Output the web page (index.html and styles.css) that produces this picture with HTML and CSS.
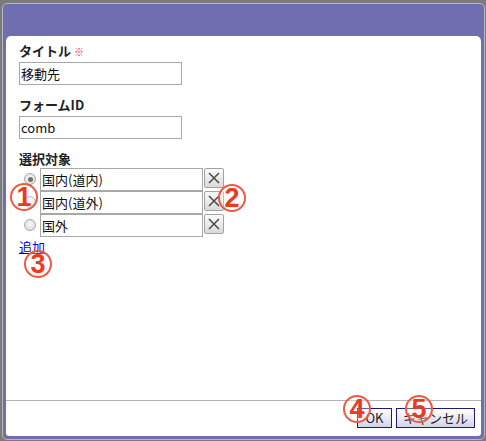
FILE: index.html
```html
<!DOCTYPE html>
<html lang="ja">
<head>
<meta charset="utf-8">
<link rel="stylesheet" href="styles.css">
</head>
<body>
<div class="dialog">
  <div class="titlebar"></div>
  <div class="panel">
    <div class="body">
      <div class="field">
        <div class="label">タイトル <span class="req">※</span></div>
        <input class="text" type="text" value="移動先">
      </div>
      <div class="field">
        <div class="label">フォームID</div>
        <input class="text" type="text" value="comb">
      </div>
      <div class="field">
        <div class="label label-tight">選択対象</div>
        <div class="opt">
          <span class="radio checked"></span>
          <input class="text" type="text" value="国内(道内)">
          <button class="del"><svg width="12" height="12" viewBox="0 0 12 12"><path d="M1 1L11 11M11 1L1 11" stroke="#4a4a4a" stroke-width="1.5" fill="none"/></svg></button>
        </div>
        <div class="opt">
          <span class="radio"></span>
          <input class="text" type="text" value="国内(道外)">
          <button class="del"><svg width="12" height="12" viewBox="0 0 12 12"><path d="M1 1L11 11M11 1L1 11" stroke="#4a4a4a" stroke-width="1.5" fill="none"/></svg></button>
        </div>
        <div class="opt">
          <span class="radio"></span>
          <input class="text" type="text" value="国外">
          <button class="del"><svg width="12" height="12" viewBox="0 0 12 12"><path d="M1 1L11 11M11 1L1 11" stroke="#4a4a4a" stroke-width="1.5" fill="none"/></svg></button>
        </div>
        <a class="add" href="#">追加</a>
      </div>
    </div>
    <div class="footer">
      <button class="btn btn-ok">OK</button>
      <button class="btn btn-cancel">キャンセル</button>
    </div>
  </div>
</div>
<span class="mark m1">1</span>
<span class="mark m2">2</span>
<span class="mark m3">3</span>
<span class="mark m4">4</span>
<span class="mark m5">5</span>
</body>
</html>
```

FILE: styles.css
```css
html, body {
  margin: 0;
  padding: 0;
}
body {
  background: #7b7b7b;
  width: 486px;
  height: 441px;
  overflow: hidden;
  position: relative;
  font-family: "Noto Sans CJK JP", "Noto Sans", sans-serif;
  font-size: 13px;
  color: #222;
}
.dialog {
  margin: 3px 1px 1px 2px;
  height: 432px;
  border: 1px solid #b8b8c0;
  border-radius: 5px;
  background: #6e6eb0;
  padding: 0 3px 3px 3px;
  display: flex;
  flex-direction: column;
}
.titlebar {
  height: 32px;
  flex: none;
}
.panel {
  flex: 1;
  background: #fff;
  border-radius: 5px 5px 3px 3px;
  display: flex;
  flex-direction: column;
}
.body {
  flex: 1;
  padding: 6px 13px 0 13px;
}
.field {
  margin-bottom: 11px;
}
.label {
  height: 17px;
  line-height: 17px;
  font-weight: bold;
  color: #222;
  margin-bottom: 3px;
}
.label-tight {
  margin-bottom: 1px;
}
.req {
  color: #d03050;
  font-size: 10px;
  font-weight: normal;
}
.text {
  box-sizing: border-box;
  width: 163px;
  height: 23px;
  border: 1px solid #a8a8a8;
  padding: 0 1px;
  margin: 0;
  font-family: "Noto Sans CJK JP", "Noto Sans", sans-serif;
  font-size: 13px;
  color: #111;
  background: #fff;
  outline: none;
  display: block;
}
.opt {
  display: flex;
  align-items: flex-start;
  height: 23px;
}
.radio {
  box-sizing: border-box;
  width: 12px;
  height: 12px;
  border-radius: 50%;
  border: 1px solid #a8a8a8;
  background: radial-gradient(circle at 50% 40%, #f8f8f8, #d8d8d8);
  margin: 5px 4px 0 5px;
  position: relative;
  flex: none;
}
.radio.checked::after {
  content: "";
  position: absolute;
  left: 2.5px;
  top: 2.5px;
  width: 5px;
  height: 5px;
  border-radius: 50%;
  background: #707070;
}
.del {
  box-sizing: border-box;
  width: 20px;
  height: 20px;
  margin: 0 0 0 1px;
  padding: 0;
  border: 1px solid #a2a2a2;
  border-radius: 2px;
  background: linear-gradient(#fbfbfb, #dadada);
  display: flex;
  align-items: center;
  justify-content: center;
  flex: none;
}
.add {
  display: inline-block;
  line-height: 17px;
  color: #0000ee;
  text-decoration: underline;
}
.footer {
  border-top: 1px solid #b4b4b4;
  height: 36px;
  box-sizing: border-box;
  padding: 7px 6px 0 0;
  display: flex;
  justify-content: flex-end;
  align-items: flex-start;
  gap: 4px;
}
.btn {
  box-sizing: border-box;
  height: 20px;
  border: 1px solid #1c1c70;
  background: linear-gradient(#ffffff, #d4d4ea);
  font-family: "Noto Sans CJK JP", "Noto Sans", sans-serif;
  font-size: 13px;
  line-height: 16px;
  color: #222;
  padding: 0;
  margin: 0;
}
.btn-ok {
  width: 35px;
}
.btn-cancel {
  width: 79px;
}
.mark {
  position: absolute;
  box-sizing: border-box;
  width: 28px;
  height: 28px;
  border-radius: 50%;
  border: 2px solid #ef5a44;
  background: rgba(255, 255, 255, 0.3);
  color: #ec3a22;
  font-family: "Liberation Sans", Arial, sans-serif;
  font-weight: bold;
  font-size: 27px;
  line-height: 24px;
  text-align: center;
}
.m1 { left: 10px; top: 183px; }
.m2 { left: 218px; top: 184px; }
.m3 { left: 24px; top: 250px; }
.m4 { left: 343px; top: 395px; }
.m5 { left: 405px; top: 395px; }
```
